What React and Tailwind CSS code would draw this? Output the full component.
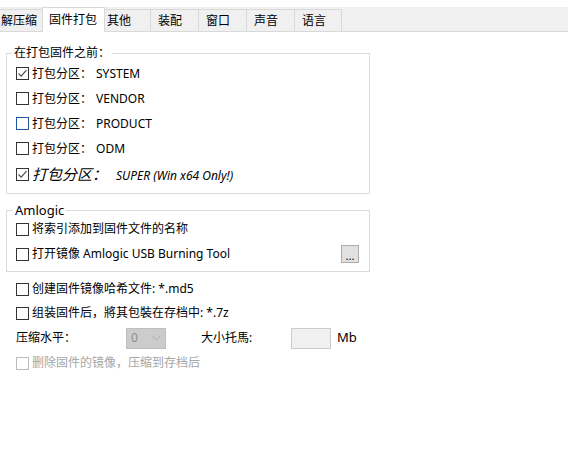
const font = { fontFamily: "'Noto Sans', 'Noto Sans CJK SC', sans-serif" };

const tabs = [
  { label: "解压缩", w: "w-[44px]", pl: "pl-[1px]" },
  { label: "固件打包", active: true },
  { label: "其他", w: "w-[48px]", pl: "pl-[4px]" },
  { label: "装配", w: "w-[48px]", pl: "pl-[7px]" },
  { label: "窗口", w: "w-[48px]", pl: "pl-[7px]" },
  { label: "声音", w: "w-[48px]", pl: "pl-[7px]" },
  { label: "语言", w: "w-[47px]", pl: "pl-[7px]" },
];

function Check({ checked, hover, disabled }) {
  const border = disabled
    ? "border-[#bcbcbc]"
    : hover
    ? "border-[#1f5b9c]"
    : "border-[#333333]";
  return (
    <span
      className={`w-[13px] h-[13px] border ${border} bg-white flex items-center justify-center shrink-0`}
    >
      {checked && (
        <svg width="11" height="11" viewBox="0 0 11 11">
          <path d="M1.5 5.5 L4.2 8.2 L9.5 2.2" fill="none" stroke="#4d4d4d" strokeWidth="1.2" />
        </svg>
      )}
    </span>
  );
}

function Row({ h = "h-[25px]", children, checked, hover, disabled, className = "" }) {
  return (
    <div className={`flex items-center ${h} ${className}`}>
      <Check checked={checked} hover={hover} disabled={disabled} />
      <span className={`ml-[3px] text-[12px] ${disabled ? "text-[#a6a6a6]" : "text-black"}`}>
        {children}
      </span>
    </div>
  );
}

function Partition({ name, checked, hover }) {
  return (
    <Row checked={checked} hover={hover}>
      打包分区：<span className="ml-[4px]">{name}</span>
    </Row>
  );
}

export default function App() {
  return (
    <div className="w-[568px] h-[458px] bg-white overflow-hidden" style={font}>
      {/* tab strip */}
      <div className="mt-[7px] h-[25px] bg-[#f0f0f0] border-b border-[#d9d9d9] flex items-end">
        {tabs.map((t) =>
          t.active ? (
            <div
              key={t.label}
              className="relative z-10 -mx-[2px] -mb-px h-[25px] w-[63px] bg-white border-x border-t border-[#d9d9d9] flex items-center pl-[6px] text-[12px]"
            >
              {t.label}
            </div>
          ) : (
            <div
              key={t.label}
              className={`h-[22px] ${t.w} ${t.pl} border-t border-r border-[#d9d9d9] flex items-center text-[12px] text-black`}
            >
              {t.label}
            </div>
          )
        )}
      </div>

      <div className="pl-[6px] w-[370px]">
        <fieldset className="mt-[13px] border border-[#dcdcdc] pl-[9px] pb-[6px]">
          <legend className="-ml-[4px] px-[2px] text-[12px] leading-[16px]">在打包固件之前：</legend>
          <Partition name="SYSTEM" checked />
          <Partition name="VENDOR" />
          <Partition name="PRODUCT" hover />
          <Partition name="ODM" />
          <Row checked h="h-[26px]">
            <span className="italic text-[15px] leading-[20px]">打包分区：</span>
            <span className="italic ml-[9px]">SUPER (Win x64 Only!)</span>
          </Row>
        </fieldset>

        <fieldset className="mt-[9px] border border-[#dcdcdc] pl-[9px] pr-[10px] pb-[3px]">
          <legend className="-ml-[3px] px-[2px] text-[13px] leading-[15px]">Amlogic</legend>
          <Row h="h-[22px]">将索引添加到固件文件的名称</Row>
          <div className="flex items-center h-[28px]">
            <Check />
            <span className="ml-[3px] text-[12px]">打开镜像 Amlogic USB Burning Tool</span>
            <button className="ml-auto w-[18px] h-[18px] bg-[#e1e1e1] border border-[#adadad] text-[11px] leading-[10px] flex items-start justify-center pt-[5px]">
              ...
            </button>
          </div>
        </fieldset>

        <div className="pl-[10px] mt-[5px]">
          <Row h="h-[24px]">创建固件镜像哈希文件: *.md5</Row>
          <Row h="h-[24px]">组装固件后，將其包裝在存档中: *.7z</Row>
          <div className="flex items-center h-[26px] text-[12px]">
            <span className="w-[110px]">压缩水平：</span>
            <div className="w-[40px] h-[21px] bg-[#cccccc] border border-[#bfbfbf] flex items-center justify-between px-[4px] text-[#8c8c8c]">
              <span>0</span>
              <svg width="9" height="6" viewBox="0 0 9 6">
                <path d="M0.5 0.8 L4.5 4.8 L8.5 0.8" fill="none" stroke="#a8a8a8" strokeWidth="1" />
              </svg>
            </div>
            <span className="ml-[35px] w-[90px]">大小托馬:</span>
            <div className="w-[40px] h-[21px] bg-[#f0f0f0] border border-[#cccccc]" />
            <span className="ml-[6px] text-[13px]">Mb</span>
          </div>
          <Row h="h-[24px]" disabled>删除固件的镜像，压缩到存档后</Row>
        </div>
      </div>
    </div>
  );
}
